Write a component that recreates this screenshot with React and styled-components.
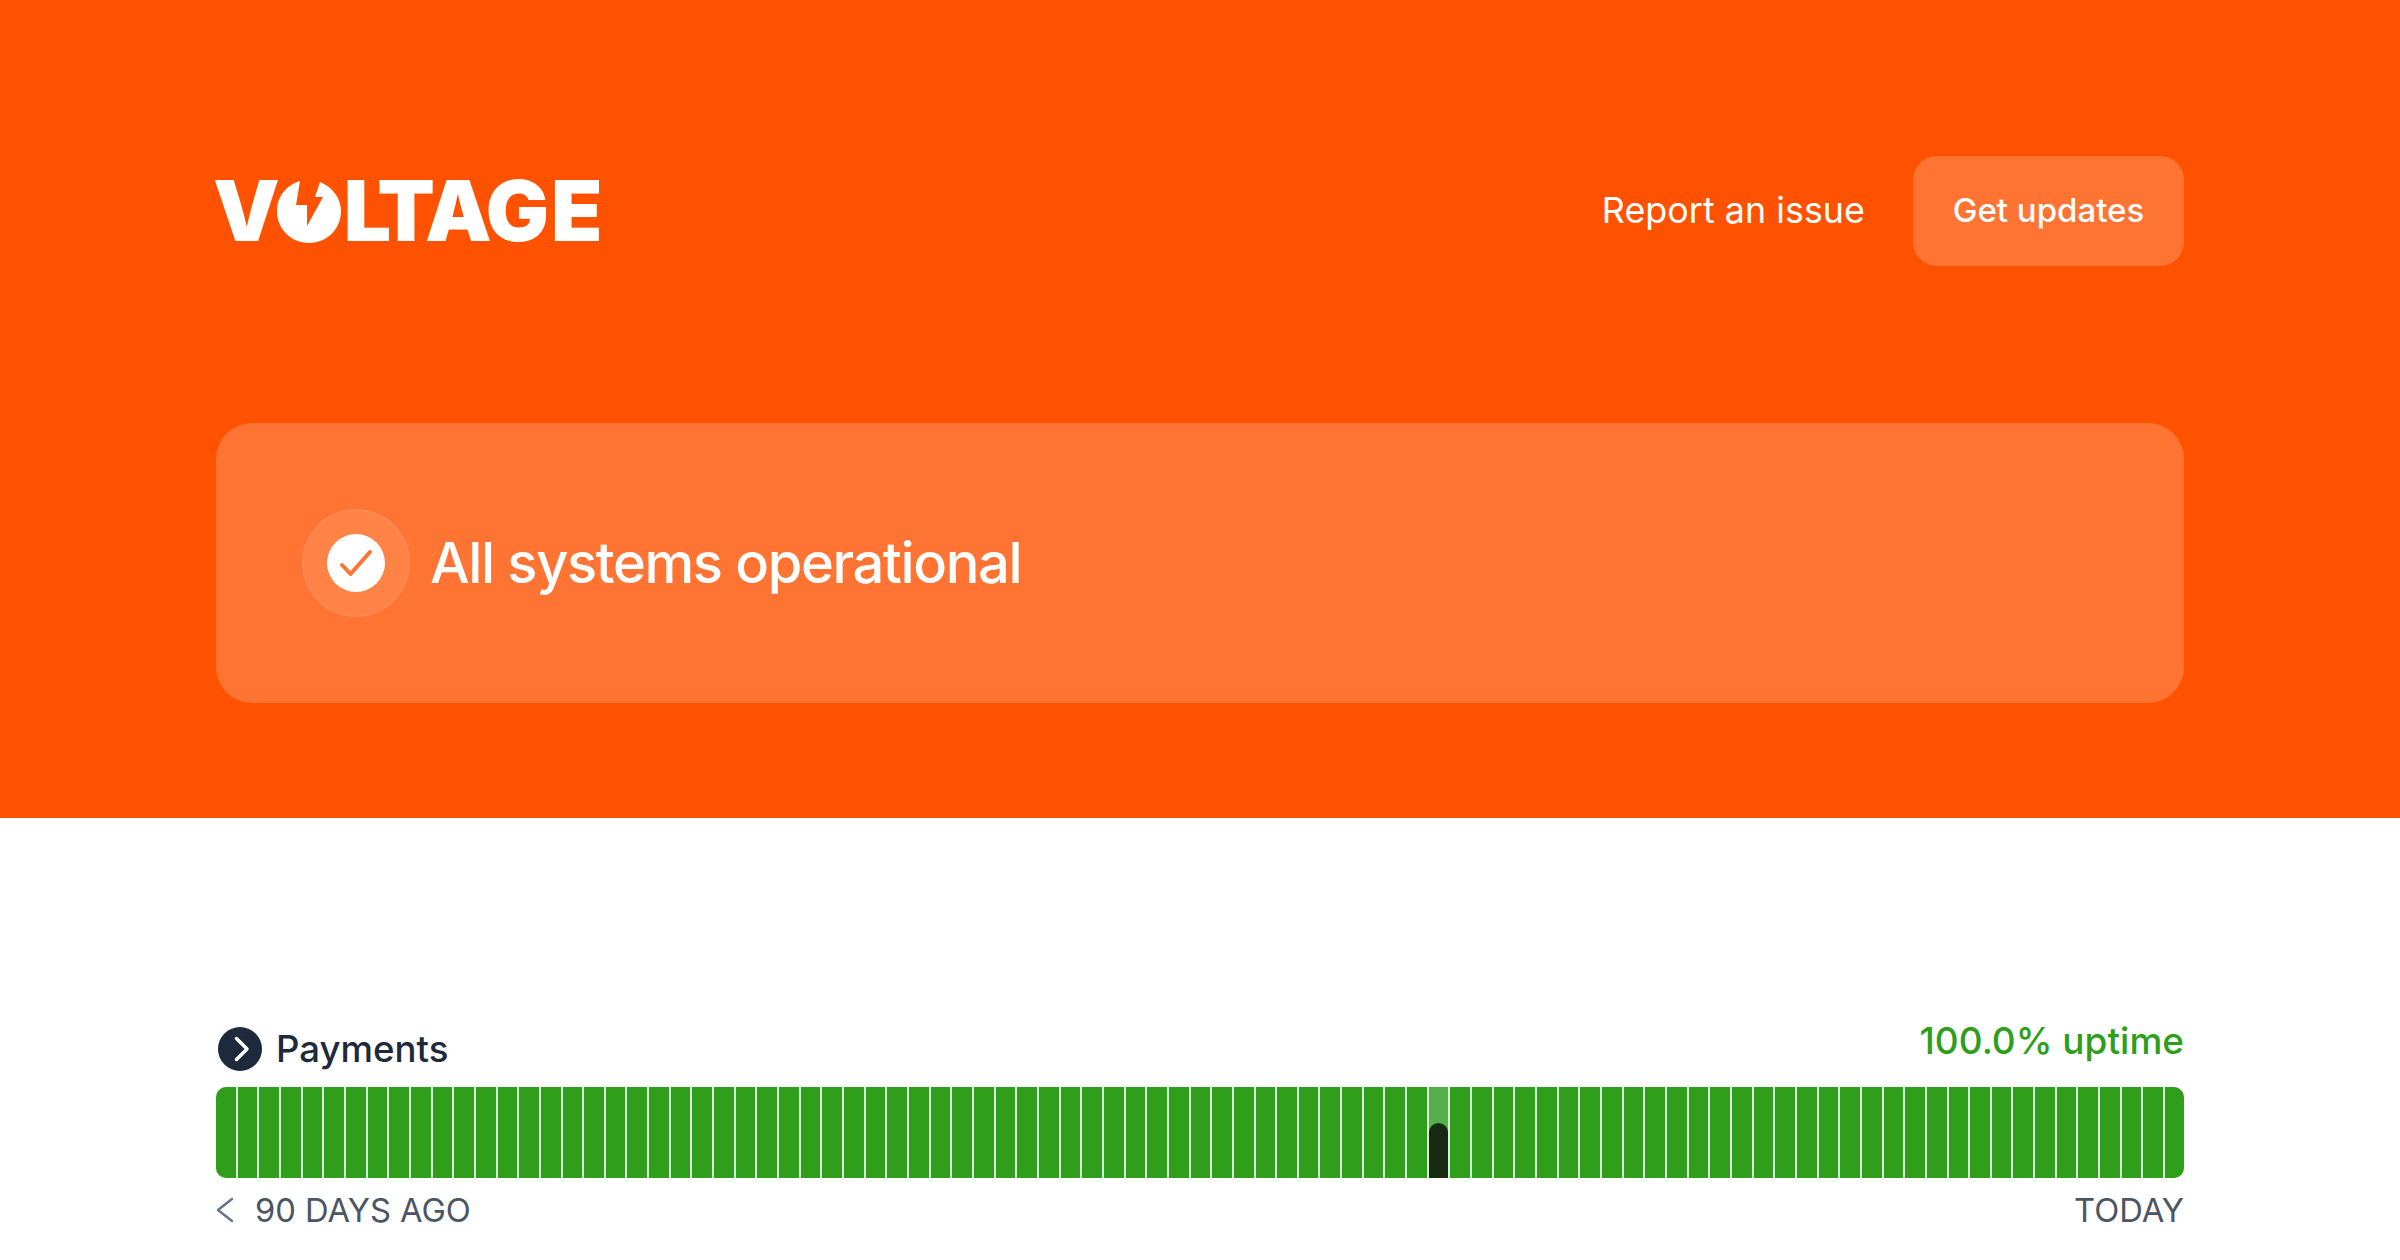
import React from 'react'
import styled, { createGlobalStyle } from 'styled-components'

const GlobalStyle = createGlobalStyle`
  html, body {
    margin: 0;
    background: #fff;
    font-family: Inter, "Liberation Sans", sans-serif;
  }
`
const Hero = styled.header`
  height: 818px;
  box-sizing: border-box;
  padding: 156px 216px 0;
  background: #ff5200;
  color: #fff;
`
const Nav = styled.nav`
  display: flex;
  align-items: center;
  justify-content: space-between;
  height: 110px;
`
const Logo = styled.div`
  display: flex;
  align-items: center;
  height: 64px;
  margin-left: -3px;
  font-family: Inter, sans-serif;
  font-weight: 900;
  font-size: 84px;
  line-height: 64px;
`
const LogoLetter = styled.span`
  display: block;
  margin-left: ${(p) => p.$shift || 0}px;
`
const NavLinks = styled.div`
  display: flex;
  align-items: center;
  gap: 48px;
`
const ReportLink = styled.a`
  margin-top: -2px;
  font-size: 35.8px;
  letter-spacing: 0.05px;
  line-height: 44px;
`
const UpdatesButton = styled.button`
  width: 271px;
  height: 110px;
  padding: 0 0 3px;
  border: 0;
  border-radius: 24px;
  background: #ff7433;
  color: #fff;
  font-family: inherit;
  font-size: 33px;
  font-weight: 500;
`
const StatusCard = styled.section`
  display: flex;
  align-items: center;
  gap: 20px;
  height: 280px;
  margin-top: 157px;
  padding-left: 86px;
  border-radius: 36px;
  background: #ff7433;
`
const Halo = styled.div`
  display: flex;
  align-items: center;
  justify-content: center;
  width: 108px;
  height: 108px;
  box-sizing: border-box;
  border: 2px solid rgba(255, 255, 255, 0.06);
  border-radius: 50%;
  background: rgba(255, 255, 255, 0.1);
`
const StatusText = styled.h1`
  margin: 0;
  font-size: 56px;
  font-weight: 500;
  letter-spacing: -1.37px;
  line-height: 64px;
`
const Main = styled.main`
  padding: 201px 216px 0;
`
const ServiceRow = styled.div`
  display: flex;
  align-items: flex-start;
  justify-content: space-between;
  height: 68px;
`
const ServiceName = styled.div`
  display: flex;
  align-items: center;
  gap: 14px;
  margin: 8px 0 0 2px;
  color: #1e293b;
  font-size: 36.6px;
  font-weight: 500;
  line-height: 44px;
`
const Uptime = styled.div`
  color: #2f9e1b;
  font-size: 37px;
  font-weight: 500;
  line-height: 44px;
`
const Bars = styled.div`
  display: flex;
  gap: 2px;
  height: 91px;
  border-radius: 10px;
  background: #dcefd9;
  overflow: hidden;
`
const Bar = styled.div`
  flex: none;
  display: flex;
  align-items: flex-end;
  width: 19.67px;
  background: ${(p) => (p.$partial ? '#56b04a' : '#2f9e1b')};
`
const OutageFill = styled.div`
  width: 100%;
  height: 60%;
  border-radius: 10px 10px 0 0;
  background: #152a10;
`
const Legend = styled.div`
  display: flex;
  align-items: center;
  justify-content: space-between;
  margin-top: 12px;
  color: #4b5563;
  font-size: 32.7px;
  line-height: 40px;
`
const LegendLeft = styled.div`
  display: flex;
  align-items: center;
  gap: 21px;
`

const OUTAGE_DAY = 56
const days = Array.from({ length: 91 }, (_, i) => i)

const App = () => {
  return (
    <>
      <GlobalStyle />
      <Hero>
        <Nav>
          <Logo aria-label="Voltage">
            <LogoLetter>V</LogoLetter>
            <svg width="66" height="64" viewBox="0 0 66 64" style={{ marginLeft: -4, flex: 'none' }}>
              <path
                fill="#fff"
                d="M24 2 L20 26 L31 26 L31 47 L47 18 L39 18 L44 3 C57 8 65 20 65 32 C65 50 51 64 33 64 C15 64 1 50 1 32 C1 17 11 6 24 2 Z"
              />
            </svg>
            <LogoLetter $shift={2}>L</LogoLetter>
            <LogoLetter $shift={-14}>T</LogoLetter>
            <LogoLetter $shift={-10}>A</LogoLetter>
            <LogoLetter $shift={-6}>G</LogoLetter>
            <LogoLetter $shift={2}>E</LogoLetter>
          </Logo>
          <NavLinks>
            <ReportLink>Report an issue</ReportLink>
            <UpdatesButton>Get updates</UpdatesButton>
          </NavLinks>
        </Nav>
        <StatusCard>
          <Halo>
            <svg width="58" height="58" viewBox="0 0 58 58">
              <circle cx="29" cy="29" r="29" fill="#fff" />
              <path d="M15 31 L23.5 40 L43 18" fill="none" stroke="#ff7433" strokeWidth="4" strokeLinecap="round" strokeLinejoin="round" />
            </svg>
          </Halo>
          <StatusText>All systems operational</StatusText>
        </StatusCard>
      </Hero>
      <Main>
        <ServiceRow>
          <ServiceName>
            <svg width="44" height="44" viewBox="0 0 44 44">
              <circle cx="22" cy="22" r="22" fill="#1e293b" />
              <path d="M18.5 11.5 L29 22 L18.5 32.5" fill="none" stroke="#fff" strokeWidth="3.5" strokeLinecap="round" strokeLinejoin="round" />
            </svg>
            Payments
          </ServiceName>
          <Uptime>100.0% uptime</Uptime>
        </ServiceRow>
        <Bars>
          {days.map((d) => (
            <Bar key={d} $partial={d === OUTAGE_DAY}>
              {d === OUTAGE_DAY && <OutageFill />}
            </Bar>
          ))}
        </Bars>
        <Legend>
          <LegendLeft>
            <svg width="18" height="26" viewBox="0 0 18 26">
              <path d="M16 2 L2 13 L16 24" fill="none" stroke="#64748b" strokeWidth="2.5" strokeLinecap="round" strokeLinejoin="round" />
            </svg>
            90 DAYS AGO
          </LegendLeft>
          <div>TODAY</div>
        </Legend>
      </Main>
    </>
  )
}

export default App
